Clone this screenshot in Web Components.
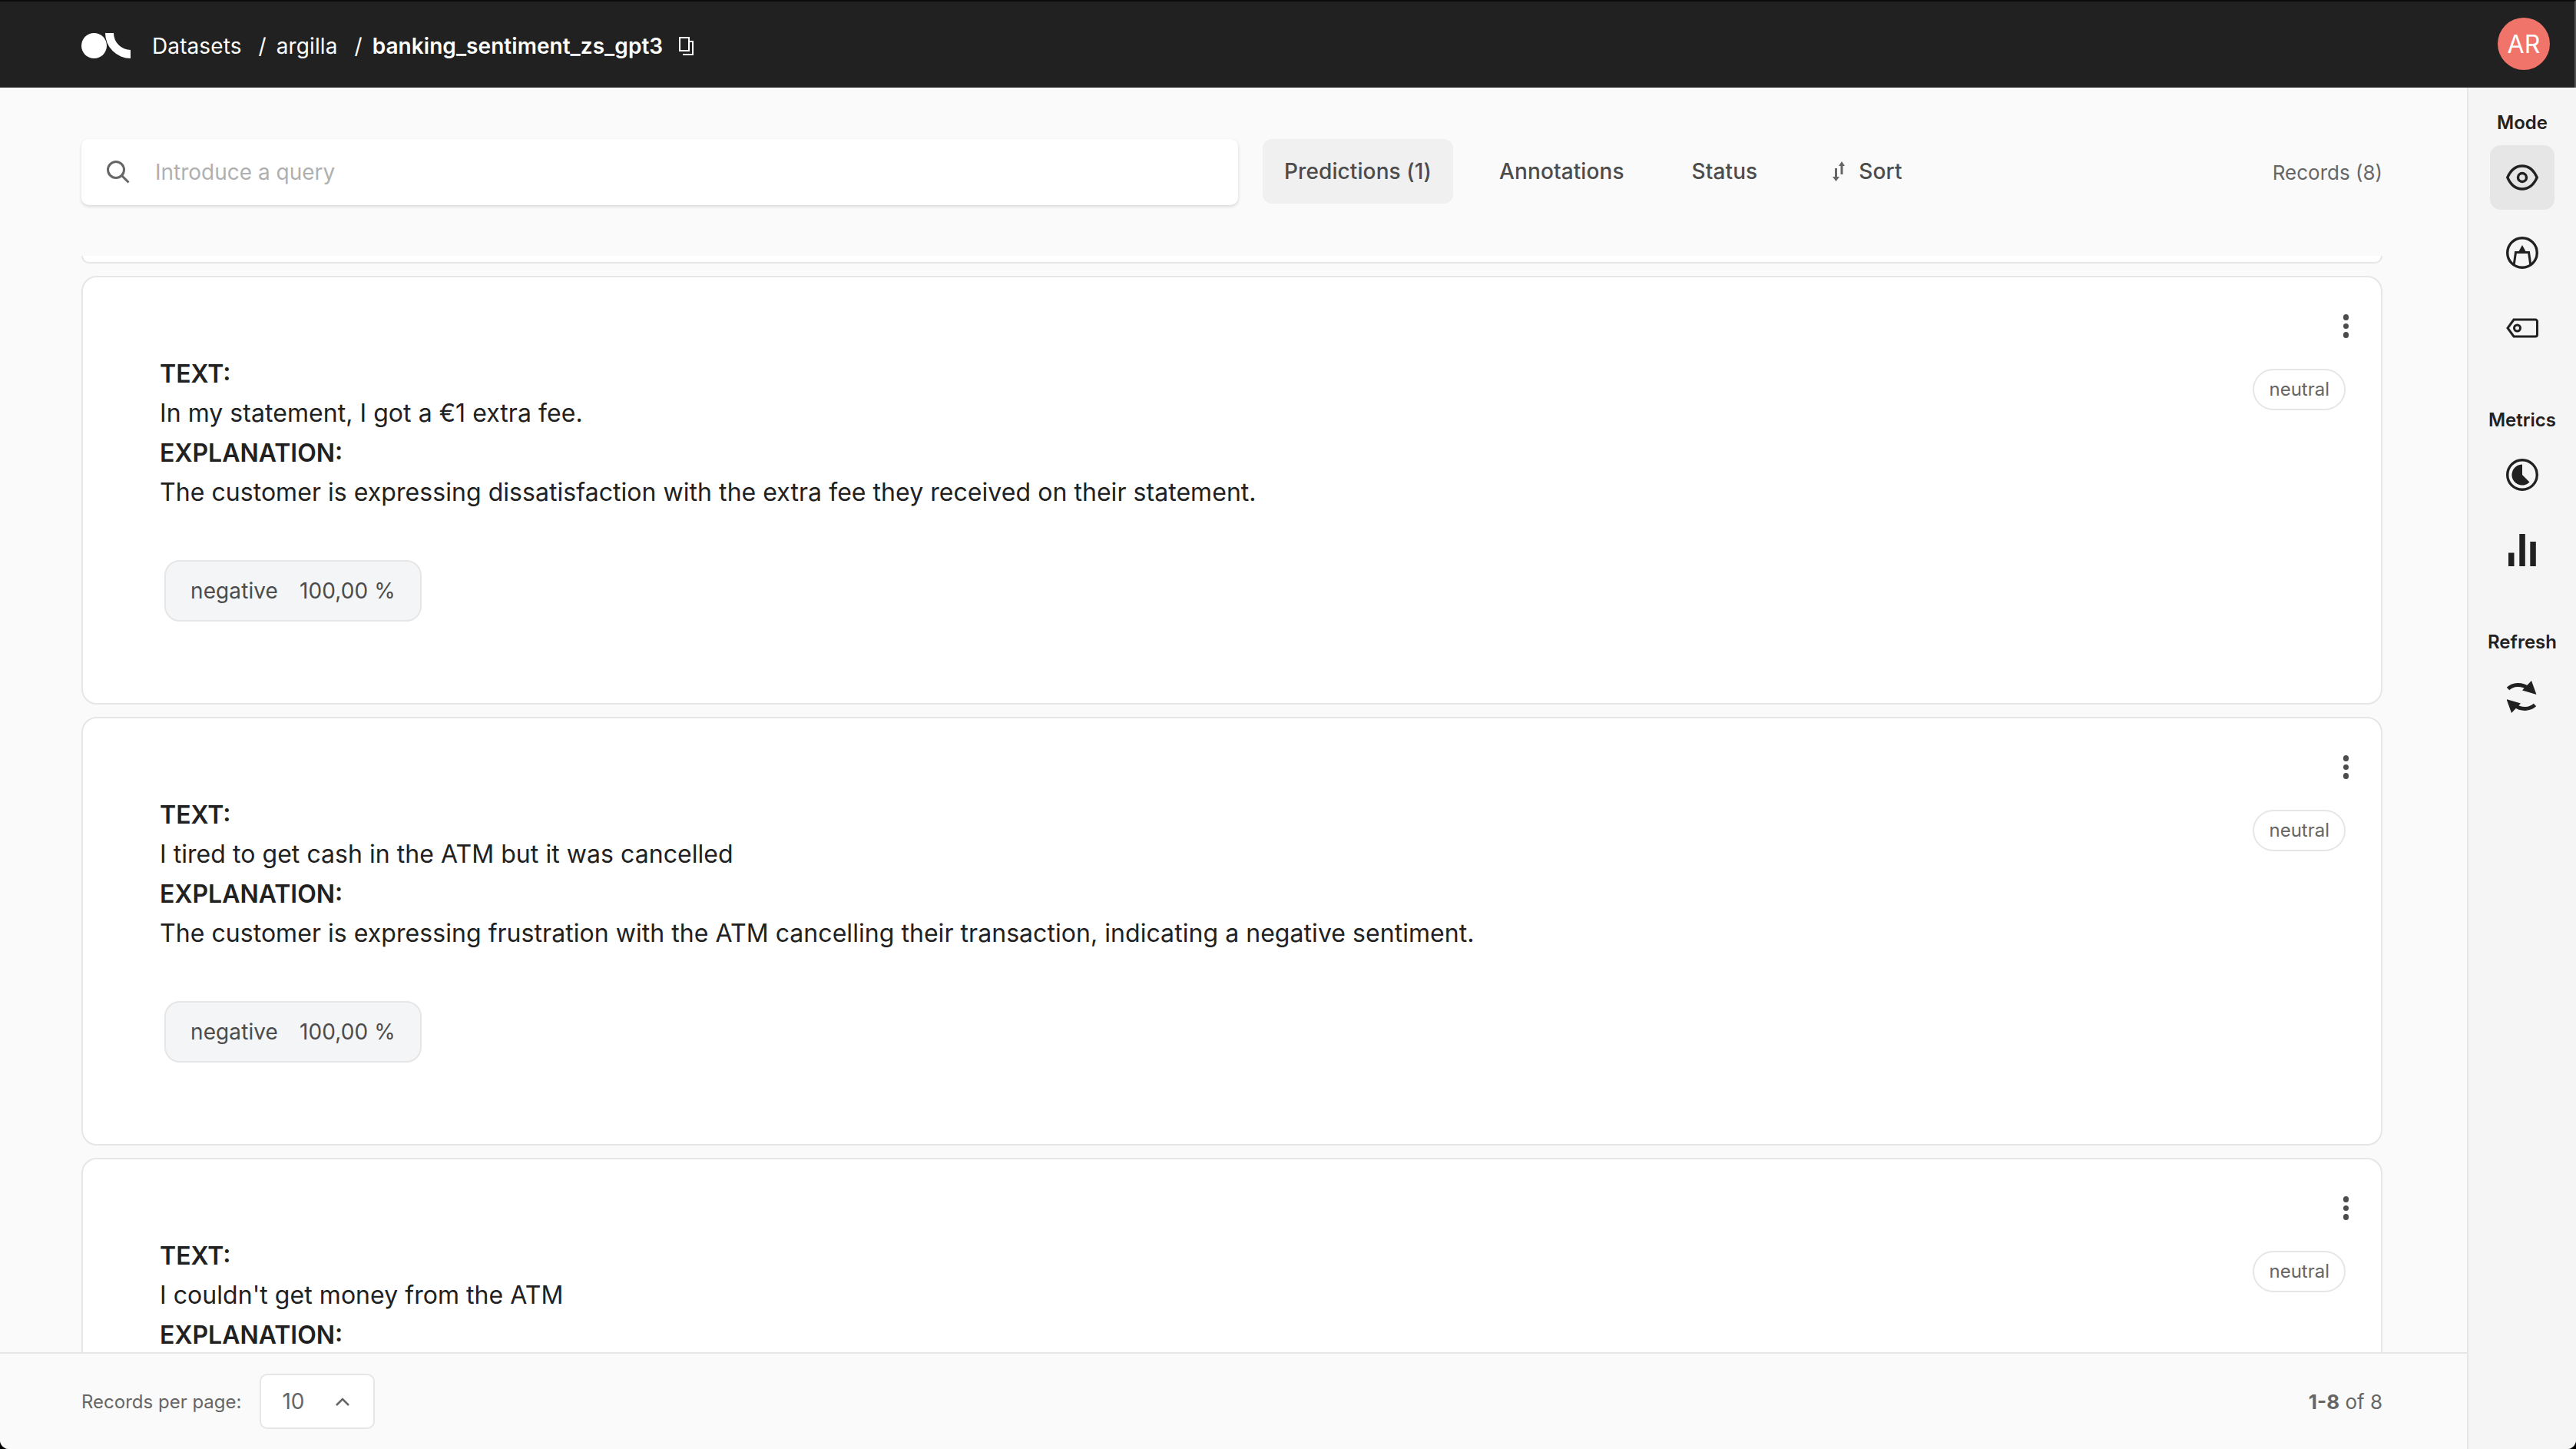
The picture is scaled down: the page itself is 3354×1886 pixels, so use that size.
<!DOCTYPE html>
<html>
<head>
<meta charset="utf-8">
<title>banking_sentiment_zs_gpt3</title>
<style>
  html, body { margin: 0; height: 100%; background: #000; }
  body { font-family: Inter, "Liberation Sans", sans-serif; overflow: hidden; }
</style>
</head>
<body>
<app-shell>
  <top-bar slot="top"></top-bar>
  <filter-bar slot="filters"></filter-bar>
  <record-card slot="records" clipped></record-card>
  <record-card slot="records"
    text="In my statement, I got a €1 extra fee."
    explanation="The customer is expressing dissatisfaction with the extra fee they received on their statement."></record-card>
  <record-card slot="records"
    text="I tired to get cash in the ATM but it was cancelled"
    explanation="The customer is expressing frustration with the ATM cancelling their transaction, indicating a negative sentiment."></record-card>
  <record-card slot="records" text="I couldn't get money from the ATM"></record-card>
  <pager-bar slot="pager"></pager-bar>
  <side-bar slot="side"></side-bar>
</app-shell>

<script>
const ICONS = {
  logo: `<svg width="64" height="33" viewBox="0 0 64 33" fill="#fff"><circle cx="16.5" cy="16.5" r="16.5"/><path d="M31 0A33 33 0 0 0 64 33V22A22 22 0 0 1 42 0z"/></svg>`,
  copy: `<svg width="19" height="24" viewBox="0 0 19 24" fill="none" stroke="#fff" stroke-width="2"><rect x="1" y="1" width="12" height="17"/><path d="M5 23H18V6H14"/></svg>`,
  search: `<svg width="30" height="30" viewBox="0 0 30 30" fill="none" stroke="#666" stroke-width="3"><circle cx="12" cy="12" r="10.5"/><path d="M19.5 19.5L28.500 28.500"/></svg>`,
  sort: `<svg width="16" height="26" viewBox="0 0 16 26" fill="#666"><path d="M3 9h3v11h3l-4.500 6L0 20h3zM10.500 17V6H8l4-6 4 6h-2.500v11z"/></svg>`,
  eye: `<svg width="42" height="34" viewBox="0 0 42 34" fill="none" stroke="#212121" stroke-width="3.4"><path d="M1.8 17C6 7.500 13 2 21 2s15 5.500 19.200 15C36 26.500 29 32 21 32S6 26.500 1.800 17z"/><circle cx="21" cy="17" r="5.500"/></svg>`,
  pencil: `<svg width="42" height="42" viewBox="0 0 42 42" fill="none"><circle cx="21" cy="21" r="19.300" stroke="#212121" stroke-width="3.400"/><path d="M21 11l5 9H16z" fill="#212121"/><path d="M10 38L12.500 20.500H29.500L32 38" stroke="#212121" stroke-width="3"/></svg>`,
  tag: `<svg width="42" height="26" viewBox="0 0 42 26" fill="none" stroke="#212121" stroke-width="3"><path d="M10 2h28a2.500 2.500 0 0 1 2.500 2.500v17a2.500 2.500 0 0 1-2.500 2.500H10L2 13z"/><circle cx="14.500" cy="13" r="4"/></svg>`,
  pie: `<svg width="42" height="42" viewBox="0 0 42 42"><circle cx="21" cy="21" r="19.300" fill="none" stroke="#212121" stroke-width="3.400"/><path d="M21 7.500a13.500 13.500 0 1 0 9.500 23L21 21z" fill="#212121"/></svg>`,
  bars: `<svg width="36" height="42" viewBox="0 0 36 42" fill="#212121"><rect x="0" y="24.500" width="7.500" height="17.500"/><rect x="14.300" y="0" width="7.500" height="42"/><rect x="28.300" y="10" width="7.500" height="32"/></svg>`,
  refresh: `<svg width="39" height="42" viewBox="0 0 39 42" fill="#212121"><g><path d="M1.500 10.500C8 4.500 19 3.500 28 10" fill="none" stroke="#212121" stroke-width="5"/><path d="M32 0l6.500 18L20 12.500z"/></g><g transform="rotate(180 19 21)"><path d="M1.500 10.500C8 4.500 19 3.500 28 10" fill="none" stroke="#212121" stroke-width="5"/><path d="M32 0l6.500 18L20 12.500z"/></g></svg>`
};

class AppShell extends HTMLElement {
  constructor() {
    super();
    this.attachShadow({ mode: 'open' });
    this.shadowRoot.innerHTML = `
      <style>
        :host { display: grid; grid-template-rows: 114px 1fr; grid-template-columns: 1fr 142px; height: 1886px; width: 3354px;
                background: #fafafa; border-radius: 0 0 12px 12px; overflow: hidden; }
        .top { grid-column: 1 / 3; }
        main { display: flex; flex-direction: column; min-height: 0; min-width: 0; }
        .records { flex: 1; min-height: 0; overflow: hidden; padding: 0 110px 0 106px; display: flex; flex-direction: column; gap: 16px; }
      </style>
      <div class="top"><slot name="top"></slot></div>
      <main>
        <slot name="filters"></slot>
        <div class="records"><slot name="records"></slot></div>
        <slot name="pager"></slot>
      </main>
      <slot name="side"></slot>`;
  }
}

class TopBar extends HTMLElement {
  constructor() {
    super();
    this.attachShadow({ mode: 'open' });
    this.shadowRoot.innerHTML = `
      <style>
        :host { display: flex; align-items: center; height: 114px; box-sizing: border-box; border-top: 2px solid #0b0b0b; border-right: 2px solid #555;
                background: #212121; color: #fff; padding: 4px 32px 0 106px; font-size: 28px; letter-spacing: .1px; }
        .logo { display: flex; margin: -2px 28px 0 0; }
        .sep { margin: 0 13px 0 22px; }
        b { font-weight: 600; letter-spacing: .05px; }
        .copy { display: flex; margin: 0 0 0 21px; }
        .avatar { margin: -6px 0 0 auto; width: 68px; height: 68px; border-radius: 50%; background: #f0746a;
                  display: flex; align-items: center; justify-content: center; font-size: 32px; }
      </style>
      <span class="logo">${ICONS.logo}</span>
      <span>Datasets</span><span class="sep">/</span><span>argilla</span><span class="sep">/</span><b>banking_sentiment_zs_gpt3</b>
      <span class="copy">${ICONS.copy}</span>
      <span class="avatar">AR</span>`;
  }
}

class FilterBar extends HTMLElement {
  constructor() {
    super();
    this.attachShadow({ mode: 'open' });
    this.shadowRoot.innerHTML = `
      <style>
        :host { display: flex; align-items: flex-start; height: 219px; box-sizing: border-box; padding: 67px 110px 0 106px;
                color: #4c4c4c; font-size: 28px; }
        .search { width: 1506px; height: 86px; box-sizing: border-box; background: #fff; border-radius: 10px;
                  box-shadow: 0 2px 4px rgba(0,0,0,.14); display: flex; align-items: center; padding-left: 33px; color: #b0b0b0; margin-right: 32px; }
        .search span { margin-left: 33px; }
        .search svg { display: block; }
        .btn { height: 84px; display: flex; align-items: center; padding: 0 28px; border-radius: 12px; font-weight: 500; letter-spacing: .1px; margin-right: 32px; white-space: nowrap; }
        .btn.on { background: #f0f0f0; }
        .btn.sort { margin-left: 10px; }
        .btn svg { margin-right: 18px; }
        .count { margin-left: auto; height: 86px; display: flex; align-items: center; font-size: 26px; color: #666; }
      </style>
      <div class="search">${ICONS.search}<span>Introduce a query</span></div>
      <div class="btn on">Predictions (1)</div>
      <div class="btn">Annotations</div>
      <div class="btn">Status</div>
      <div class="btn sort">${ICONS.sort}Sort</div>
      <div class="count">Records (8)</div>`;
  }
}

class RecordCard extends HTMLElement {
  constructor() {
    super();
    this.attachShadow({ mode: 'open' });
  }
  connectedCallback() {
    const text = this.getAttribute('text') || '';
    const explanation = this.getAttribute('explanation');
    if (this.hasAttribute('clipped')) {
      this.shadowRoot.innerHTML = `
        <style>
          :host { display: block; flex: none; height: 10px; box-sizing: border-box; background: #fff;
                  border: 2px solid #e6e6e6; border-top: 0; border-radius: 0 0 20px 20px; }
        </style>`;
      return;
    }
    // last card runs under the pager, nothing past the EXPLANATION label shows
    const rest = explanation
      ? `<p>${explanation}</p><div class="pred"><span>negative</span><span>100,00 %</span></div>`
      : '';
    this.shadowRoot.innerHTML = `
      <style>
        :host { display: block; flex: none; position: relative; height: 558px; box-sizing: border-box; background: #fff;
                border: 2px solid #e6e6e6; border-radius: 20px; padding: 100px 100px 0 100px;
                color: #212121; font-size: 32px; line-height: 51.3px; }
        b { display: block; font-weight: 600; }
        p { margin: 0; letter-spacing: .05px; }
        .pred { display: inline-flex; align-items: center; margin: 63px 0 0 6px; height: 80px; box-sizing: border-box; padding: 0 32px;
                background: #f4f5f7; border: 2px solid #e6e6e6; border-radius: 20px; color: #4c4c4c; font-size: 28px; line-height: 1; letter-spacing: .1px; }
        .pred span + span { margin-left: 28px; }
        .menu { position: absolute; top: 48px; right: 42px; display: flex; flex-direction: column; gap: 4px; }
        .menu i { width: 7.500px; height: 7.500px; border-radius: 50%; background: #4c4c4c; }
        .gold { position: absolute; top: 119px; right: 46px; height: 54px; box-sizing: border-box; display: flex; align-items: center;
                padding: 0 19px; border: 2px solid #e6e6e6; border-radius: 27px; font-size: 24px; line-height: 1; color: #666; }
      </style>
      <div class="menu"><i></i><i></i><i></i></div>
      <span class="gold">neutral</span>
      <b>TEXT:</b>
      <p>${text}</p>
      <b>EXPLANATION:</b>
      ${rest}`;
  }
}

class PagerBar extends HTMLElement {
  constructor() {
    super();
    this.attachShadow({ mode: 'open' });
    this.shadowRoot.innerHTML = `
      <style>
        :host { display: flex; align-items: center; flex: none; height: 126px; box-sizing: border-box; padding: 0 110px 0 106px;
                background: #fafafa; border-top: 2px solid #e6e6e6; color: #666; font-size: 24px; position: relative; }
        .select { display: flex; align-items: center; width: 150px; height: 72px; box-sizing: border-box; margin-left: 24px; padding-left: 27px;
                  background: #fff; border: 2px solid #e6e6e6; border-radius: 10px; font-size: 28px; }
        .select svg { margin-left: 40px; }
        .range { margin-left: auto; font-size: 26px; }
        b { font-weight: 700; }
      </style>
      <span>Records per page:</span>
      <div class="select"><span>10</span><svg width="18" height="11" viewBox="0 0 18 11" fill="none" stroke="#666" stroke-width="2.600"><path d="M1 10l8-8 8 8"/></svg></div>
      <span class="range"><b>1-8</b> of 8</span>`;
  }
}

class SideBar extends HTMLElement {
  constructor() {
    super();
    this.attachShadow({ mode: 'open' });
    this.shadowRoot.innerHTML = `
      <style>
        :host { display: flex; flex-direction: column; align-items: center; box-sizing: border-box; padding-top: 28px;
                background: #f5f5f5; border-left: 2px solid #e6e6e6; color: #212121; font-size: 24px; font-weight: 600; }
        h3 { margin: 0 0 -3px; font: inherit; line-height: 36px; }
        .group { display: flex; flex-direction: column; align-items: center; gap: 14px; margin-bottom: 60px; }
        .btn { width: 84px; height: 84px; border-radius: 14px; display: flex; align-items: center; justify-content: center; }
        .btn.on { background: #e6e6e6; }
      </style>
      <div class="group"><h3>Mode</h3>
        <div class="btn on">${ICONS.eye}</div>
        <div class="btn">${ICONS.pencil}</div>
        <div class="btn">${ICONS.tag}</div>
      </div>
      <div class="group"><h3>Metrics</h3>
        <div class="btn">${ICONS.pie}</div>
        <div class="btn">${ICONS.bars}</div>
      </div>
      <div class="group"><h3>Refresh</h3>
        <div class="btn">${ICONS.refresh}</div>
      </div>`;
  }
}

customElements.define('app-shell', AppShell);
customElements.define('top-bar', TopBar);
customElements.define('filter-bar', FilterBar);
customElements.define('record-card', RecordCard);
customElements.define('pager-bar', PagerBar);
customElements.define('side-bar', SideBar);
</script>
</body>
</html>
